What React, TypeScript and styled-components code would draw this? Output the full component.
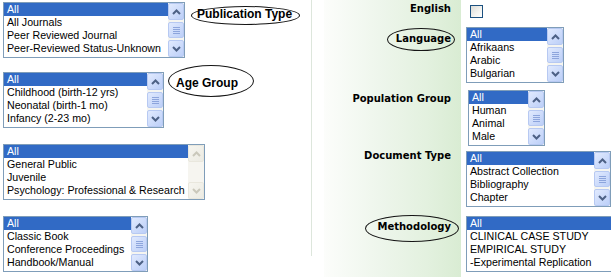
import styled, { createGlobalStyle, css } from "styled-components";

const GlobalStyle = createGlobalStyle`
  html, body, #root {
    margin: 0;
    height: 100%;
  }
  body {
    overflow: hidden;
    background: #fff;
    font-family: "Liberation Sans", Arial, sans-serif;
  }
`;

const Page = styled.div`
  display: flex;
  height: 100%;
`;

const LeftColumn = styled.div`
  flex: 0 0 311px;
  padding-left: 3px;
  box-sizing: border-box;
  display: flex;
  flex-direction: column;
`;

const Divider = styled.div`
  flex: 0 0 1px;
  height: 256px;
  background: #dde6dc;
  margin-right: 12px;
`;

const LeftRow = styled.div<{ $mt: number }>`
  display: flex;
  align-items: flex-start;
  margin-top: ${({ $mt }) => $mt}px;
`;

type Insets = { t: number; r: number; b: number; l: number };

const Annotated = styled.span<{ $oval?: Insets }>`
  position: relative;
  display: inline-block;
  ${({ $oval }) =>
    $oval &&
    css`
      &::before {
        content: "";
        position: absolute;
        top: ${$oval.t}px;
        right: ${$oval.r}px;
        bottom: ${$oval.b}px;
        left: ${$oval.l}px;
        border: 1.5px solid #151515;
        border-radius: 50%;
        pointer-events: none;
      }
    `}
`;

const SideLabel = styled(Annotated)<{ $ml: number; $mt: number }>`
  margin-left: ${({ $ml }) => $ml}px;
  margin-top: ${({ $mt }) => $mt}px;
  font-family: "Liberation Sans", Arial, sans-serif;
  font-weight: bold;
  font-size: 12px;
  line-height: 14px;
  color: #000;
  white-space: nowrap;
`;

const Form = styled.div`
  flex: 1 0 auto;
  height: 100%;
  display: flex;
  flex-direction: column;
  background: linear-gradient(90deg, #fcfdfb 0%, #eef6ec 40%, #e3f1df 75%, #d9ecd3 100%)
    0 0 / 137px 100% no-repeat;
`;

const FieldRow = styled.div<{ $mt: number }>`
  display: grid;
  grid-template-columns: 137px auto;
  align-items: start;
  margin-top: ${({ $mt }) => $mt}px;
`;

const FieldLabel = styled.div<{ $mt: number }>`
  margin-top: ${({ $mt }) => $mt}px;
  padding-right: 10px;
  text-align: right;
  font-family: "DejaVu Sans", Verdana, sans-serif;
  font-weight: bold;
  font-size: 10px;
  line-height: 12px;
  color: #000;
  white-space: nowrap;
`;

const FieldControl = styled.div<{ $indent: number }>`
  padding-left: ${({ $indent }) => $indent}px;
  display: flex;
`;

const Checkbox = styled.span`
  width: 13px;
  height: 13px;
  box-sizing: border-box;
  border: 1px solid #1c5180;
  background: linear-gradient(135deg, #dcdcd7 0%, #f4f4f1 60%, #ffffff 100%);
`;

const Frame = styled.div<{ $w: number }>`
  width: ${({ $w }) => $w}px;
  min-width: ${({ $w }) => $w}px;
  height: 56px;
  box-sizing: border-box;
  border: 1px solid #7f9db9;
  background: #fff;
  display: flex;
  overflow: hidden;
`;

const Options = styled.div`
  flex: 1;
  min-width: 0;
  display: flex;
  flex-direction: column;
`;

const Option = styled.div<{ $selected?: boolean }>`
  height: 13px;
  line-height: 13px;
  padding-left: 3px;
  font-family: "Liberation Sans", Arial, sans-serif;
  font-size: 10.67px;
  white-space: nowrap;
  overflow: hidden;
  color: ${({ $selected }) => ($selected ? "#fff" : "#000")};
  background: ${({ $selected }) => ($selected ? "#316ac5" : "transparent")};
`;

const ScrollBar = styled.div<{ $disabled?: boolean }>`
  flex: 0 0 16px;
  display: flex;
  flex-direction: column;
  background: ${({ $disabled }) => ($disabled ? "#f6f5f0" : "#f5f5f0")};
`;

const ScrollButton = styled.div<{ $disabled?: boolean }>`
  height: 17px;
  box-sizing: border-box;
  border-radius: 2px;
  display: flex;
  align-items: center;
  justify-content: center;
  border: 1px solid ${({ $disabled }) => ($disabled ? "#e9e7dd" : "#b7c9f2")};
  background: ${({ $disabled }) =>
    $disabled
      ? "linear-gradient(135deg, #f6f5ef, #ecebe3)"
      : "linear-gradient(135deg, #e1eafe, #bccff8)"};
`;

const Track = styled.div`
  flex: 1;
  padding-top: 2px;
`;

const Thumb = styled.div`
  height: 16px;
  box-sizing: border-box;
  border-radius: 2px;
  border: 1px solid #b7c9f2;
  background: linear-gradient(135deg, #e1eafe, #bccff8);
  display: flex;
  flex-direction: column;
  align-items: center;
  justify-content: center;
  gap: 1px;
`;

const Grip = styled.span`
  width: 7px;
  height: 1px;
  background: #8da5dc;
`;

function Chevron({ up, disabled }: { up?: boolean; disabled?: boolean }) {
  return (
    <svg width="9" height="6" viewBox="0 0 9 6">
      <polyline
        points={up ? "1,5 4.5,1.5 8,5" : "1,1 4.5,4.5 8,1"}
        fill="none"
        stroke={disabled ? "#cac8bb" : "#4d6185"}
        strokeWidth="2"
      />
    </svg>
  );
}

type ListBoxProps = {
  width: number;
  items: string[];
  disabled?: boolean;
};

function ListBox({ width, items, disabled }: ListBoxProps) {
  return (
    <Frame $w={width}>
      <Options>
        {items.map((item, i) => (
          <Option key={item} $selected={i === 0}>
            {item}
          </Option>
        ))}
      </Options>
      <ScrollBar $disabled={disabled}>
        <ScrollButton $disabled={disabled}>
          <Chevron up disabled={disabled} />
        </ScrollButton>
        <Track>
          {!disabled && (
            <Thumb>
              <Grip />
              <Grip />
              <Grip />
              <Grip />
            </Thumb>
          )}
        </Track>
        <ScrollButton $disabled={disabled}>
          <Chevron disabled={disabled} />
        </ScrollButton>
      </ScrollBar>
    </Frame>
  );
}

function App() {
  return (
    <>
      <GlobalStyle />
      <Page>
        <LeftColumn>
          <LeftRow $mt={2}>
            <ListBox
              width={182}
              items={["All", "All Journals", "Peer Reviewed Journal", "Peer-Reviewed Status-Unknown"]}
            />
            <SideLabel $ml={12} $mt={5} $oval={{ t: -1, r: -8, b: -4, l: -6 }}>
              Publication Type
            </SideLabel>
          </LeftRow>
          <LeftRow $mt={14}>
            <ListBox
              width={161}
              items={["All", "Childhood (birth-12 yrs)", "Neonatal (birth-1 mo)", "Infancy (2-23 mo)"]}
            />
            <SideLabel $ml={12} $mt={4} $oval={{ t: -11, r: -16, b: -7, l: -8 }}>
              Age Group
            </SideLabel>
          </LeftRow>
          <LeftRow $mt={16}>
            <ListBox
              width={202}
              disabled
              items={["All", "General Public", "Juvenile", "Psychology: Professional & Research"]}
            />
          </LeftRow>
          <LeftRow $mt={16}>
            <ListBox
              width={145}
              items={["All", "Classic Book", "Conference Proceedings", "Handbook/Manual"]}
            />
          </LeftRow>
        </LeftColumn>

        <Divider />

        <Form>
          <FieldRow $mt={5}>
            <FieldLabel $mt={-2}>English</FieldLabel>
            <FieldControl $indent={9}>
              <Checkbox />
            </FieldControl>
          </FieldRow>
          <FieldRow $mt={9}>
            <FieldLabel $mt={6}>
              <Annotated $oval={{ t: -5, r: -4, b: -6, l: -9 }}>Language</Annotated>
            </FieldLabel>
            <FieldControl $indent={5}>
              <ListBox width={98} items={["All", "Afrikaans", "Arabic", "Bulgarian"]} />
            </FieldControl>
          </FieldRow>
          <FieldRow $mt={7}>
            <FieldLabel $mt={3}>Population Group</FieldLabel>
            <FieldControl $indent={7}>
              <ListBox width={77} items={["All", "Human", "Animal", "Male"]} />
            </FieldControl>
          </FieldRow>
          <FieldRow $mt={5}>
            <FieldLabel $mt={-1}>Document Type</FieldLabel>
            <FieldControl $indent={5}>
              <ListBox
                width={145}
                items={["All", "Abstract Collection", "Bibliography", "Chapter"]}
              />
            </FieldControl>
          </FieldRow>
          <FieldRow $mt={9}>
            <FieldLabel $mt={5}>
              <Annotated $oval={{ t: -6, r: -8, b: -9, l: -12 }}>Methodology</Annotated>
            </FieldLabel>
            <FieldControl $indent={5}>
              <ListBox
                width={220}
                items={[
                  "All",
                  "CLINICAL CASE STUDY",
                  "EMPIRICAL STUDY",
                  "-Experimental Replication",
                ]}
              />
            </FieldControl>
          </FieldRow>
        </Form>
      </Page>
    </>
  );
}

export default App;
